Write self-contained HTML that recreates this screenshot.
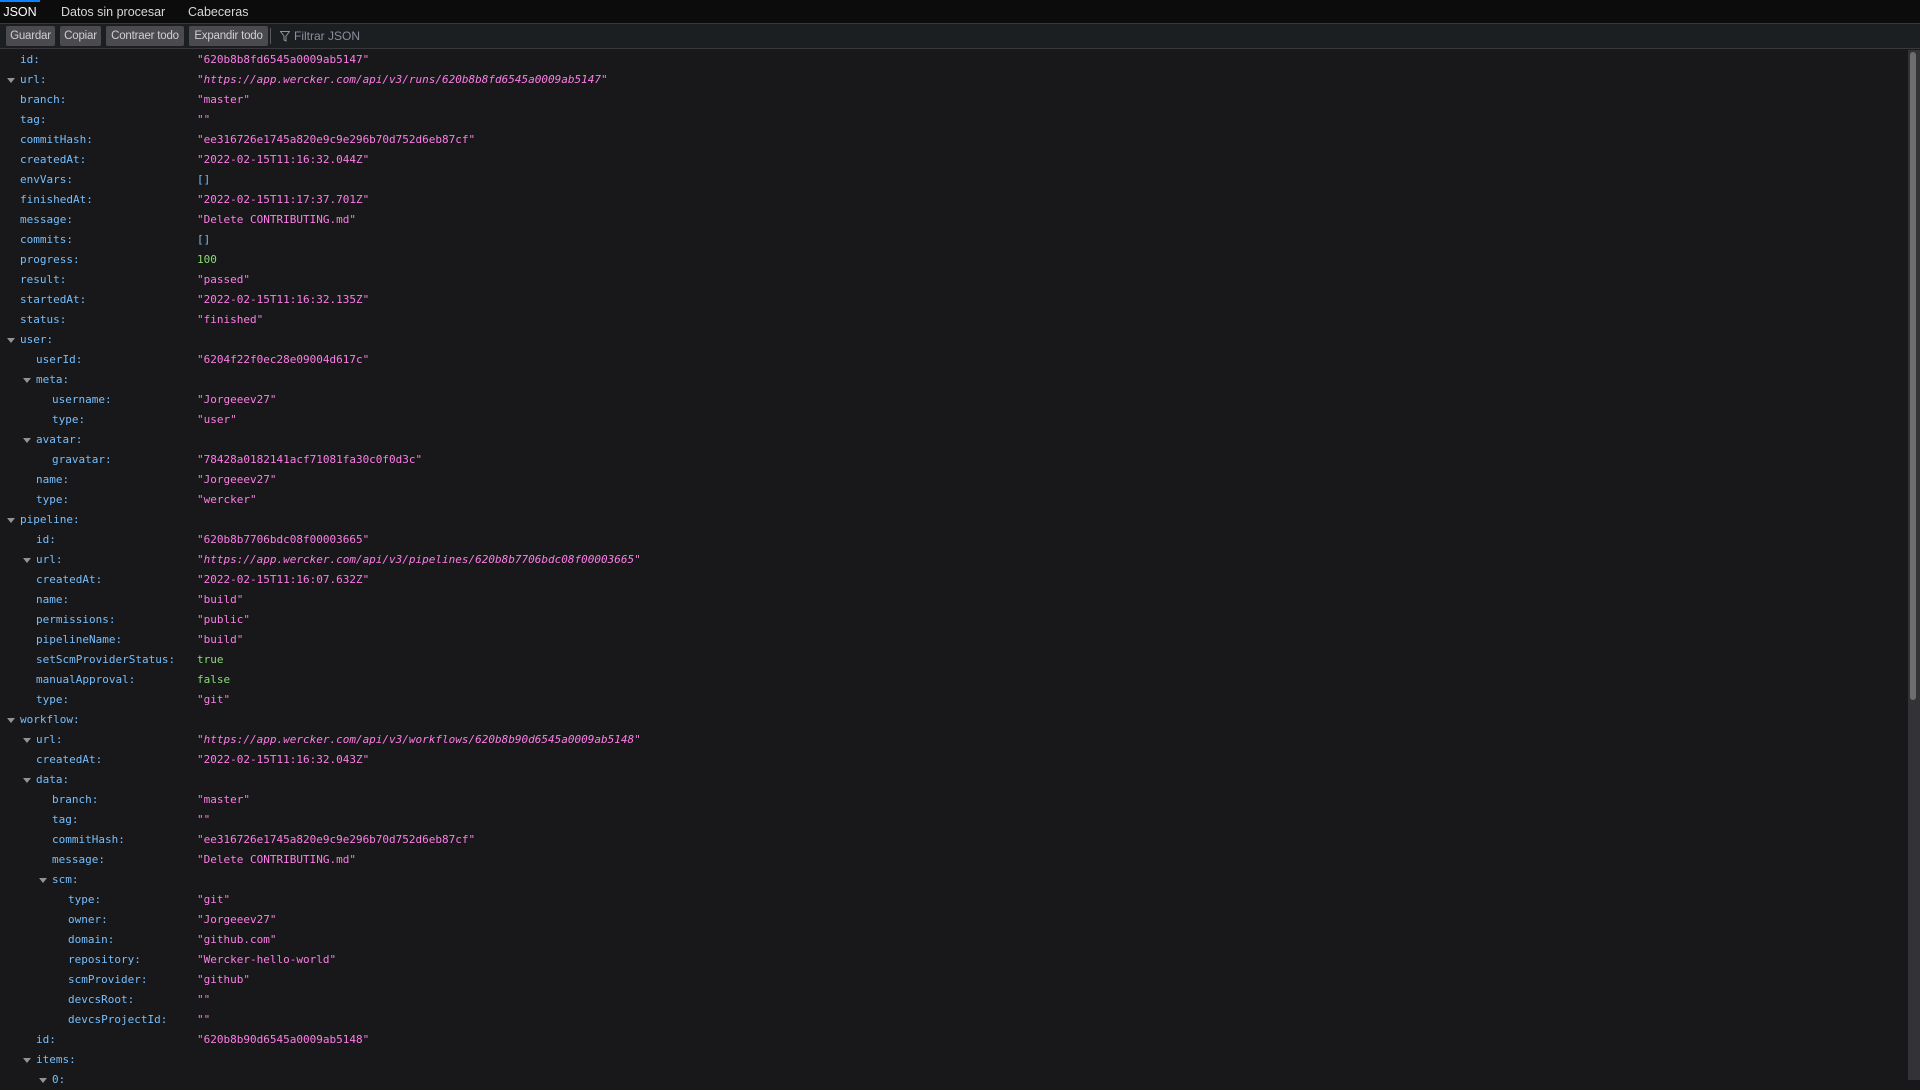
<!DOCTYPE html>
<html><head><meta charset="utf-8"><style>
html,body{margin:0;padding:0;width:1920px;height:1080px;overflow:hidden;background:#18181a;font-family:"Liberation Sans",sans-serif}
.tabs{position:absolute;left:0;top:0;width:1920px;height:24px;background:#0c0c0d;border-bottom:1px solid #38383d;box-sizing:border-box}
.tab{position:absolute;top:0;height:24px;line-height:25px;font-size:12.5px;color:#d7d7db;white-space:nowrap}
.tab.act{border-top:2px solid #0a84ff;line-height:21px;color:#fff}
.tb{position:absolute;left:0;top:24px;width:1920px;height:25px;background:#1b1f22;border-bottom:1px solid #38383d;box-sizing:border-box}
.btn{position:absolute;top:2px;height:20px;line-height:20px;background:#4a4a4f;color:#d0d0d4;font-size:11.5px;text-align:center;white-space:nowrap;overflow:hidden;border-radius:2px;box-sizing:border-box;letter-spacing:-0.2px}
.row{position:absolute;left:0;height:20px;line-height:20px;font-family:"DejaVu Sans Mono","Liberation Mono",monospace;font-size:11px;white-space:pre}
.k{position:absolute;color:#75bfff}
.v{position:absolute;left:197px}
.s{color:#ff7de9}.n{color:#86de74}.a{color:#75bfff}.i{font-style:italic}
.tw{position:absolute;top:8px;width:0;height:0;border-left:4px solid transparent;border-right:4px solid transparent;border-top:5px solid #939395}
.sb{position:absolute;left:1908px;top:50px;width:12px;height:1030px;background:#333337}
.th{position:absolute;left:1910px;top:52px;width:6px;height:648px;background:#6d6d6d;border-radius:3px}
</style></head><body>
<div class="tabs">
<div class="tab act" style="left:0;width:40px;text-align:center">JSON</div>
<div class="tab" style="left:61px">Datos sin procesar</div>
<div class="tab" style="left:188px">Cabeceras</div>
</div>
<div class="tb">
<div class="btn" style="left:6px;width:49px">Guardar</div>
<div class="btn" style="left:60px;width:41px">Copiar</div>
<div class="btn" style="left:106px;width:78px">Contraer todo</div>
<div class="btn" style="left:189px;width:79px">Expandir todo</div>
<div style="position:absolute;left:270px;top:4px;width:1px;height:16px;background:#5a5a5f"></div>
<svg style="position:absolute;left:280px;top:7px" width="10" height="11" viewBox="0 0 10 11"><path d="M0.5 0.5h9L6 5v5L4 9V5z" fill="none" stroke="#939395"/></svg>
<div style="position:absolute;left:294px;top:0;line-height:25px;font-size:12px;color:#8f8f9d">Filtrar JSON</div>
</div>
<div id="rows"></div>
<div class="sb"></div><div class="th"></div>
<script>
var R=[
[0,'id','s','"620b8b8fd6545a0009ab5147"'],
[0,'url','si','"https://app.wercker.com/api/v3/runs/620b8b8fd6545a0009ab5147"',1],
[0,'branch','s','"master"'],[0,'tag','s','""'],
[0,'commitHash','s','"ee316726e1745a820e9c9e296b70d752d6eb87cf"'],
[0,'createdAt','s','"2022-02-15T11:16:32.044Z"'],
[0,'envVars','a','[]'],
[0,'finishedAt','s','"2022-02-15T11:17:37.701Z"'],
[0,'message','s','"Delete CONTRIBUTING.md"'],
[0,'commits','a','[]'],
[0,'progress','n','100'],
[0,'result','s','"passed"'],
[0,'startedAt','s','"2022-02-15T11:16:32.135Z"'],
[0,'status','s','"finished"'],
[0,'user','',''],
[1,'userId','s','"6204f22f0ec28e09004d617c"'],
[1,'meta','',''],
[2,'username','s','"Jorgeeev27"'],[2,'type','s','"user"'],
[1,'avatar','',''],
[2,'gravatar','s','"78428a0182141acf71081fa30c0f0d3c"'],
[1,'name','s','"Jorgeeev27"'],[1,'type','s','"wercker"'],
[0,'pipeline','',''],
[1,'id','s','"620b8b7706bdc08f00003665"'],
[1,'url','si','"https://app.wercker.com/api/v3/pipelines/620b8b7706bdc08f00003665"',1],
[1,'createdAt','s','"2022-02-15T11:16:07.632Z"'],
[1,'name','s','"build"'],[1,'permissions','s','"public"'],[1,'pipelineName','s','"build"'],
[1,'setScmProviderStatus','n','true'],[1,'manualApproval','n','false'],[1,'type','s','"git"'],
[0,'workflow','',''],
[1,'url','si','"https://app.wercker.com/api/v3/workflows/620b8b90d6545a0009ab5148"',1],
[1,'createdAt','s','"2022-02-15T11:16:32.043Z"'],
[1,'data','',''],
[2,'branch','s','"master"'],[2,'tag','s','""'],
[2,'commitHash','s','"ee316726e1745a820e9c9e296b70d752d6eb87cf"'],
[2,'message','s','"Delete CONTRIBUTING.md"'],
[2,'scm','',''],
[3,'type','s','"git"'],[3,'owner','s','"Jorgeeev27"'],[3,'domain','s','"github.com"'],
[3,'repository','s','"Wercker-hello-world"'],[3,'scmProvider','s','"github"'],
[3,'devcsRoot','s','""'],[3,'devcsProjectId','s','""'],
[1,'id','s','"620b8b90d6545a0009ab5148"'],
[1,'items','',''],[2,'0','','']];
var h='';
R.forEach(function(r,i){
var d=r[0],x=20+16*d,tw=(r[2]==''||r[4]);
h+='<div class="row" style="top:'+(50+20*i)+'px;width:1900px">';
if(tw)h+='<div class="tw" style="left:'+(x-13)+'px"></div>';
h+='<span class="k" style="left:'+x+'px">'+r[1]+':</span>';
if(r[3]){var c=r[2]=='si'?'s i':r[2];h+='<span class="v '+c+'">'+r[3]+'</span>';}
h+='</div>';});
document.getElementById('rows').innerHTML=h;
</script>
</body></html>
